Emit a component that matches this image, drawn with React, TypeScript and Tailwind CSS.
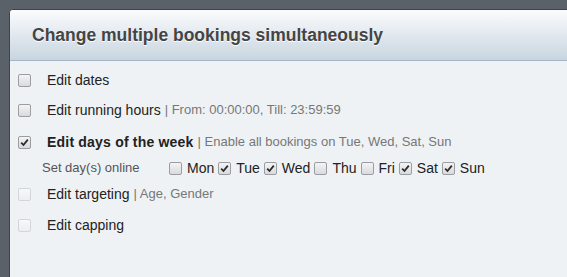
import React from "react";

type Day = { label: string; checked: boolean };

const DAYS: Day[] = [
  { label: "Mon", checked: false },
  { label: "Tue", checked: true },
  { label: "Wed", checked: true },
  { label: "Thu", checked: false },
  { label: "Fri", checked: false },
  { label: "Sat", checked: true },
  { label: "Sun", checked: true },
];

function Box({ checked = false, disabled = false }: { checked?: boolean; disabled?: boolean }) {
  return (
    <span
      className={
        disabled
          ? "inline-flex h-[13px] w-[13px] shrink-0 items-center justify-center rounded-[2px] border border-[#d3d6d9] bg-gradient-to-b from-[#f7f8f9] to-[#eceef0]"
          : "inline-flex h-[13px] w-[13px] shrink-0 items-center justify-center rounded-[2px] border border-[#9a9da1] bg-gradient-to-b from-[#f4f4f4] to-[#d9dadb]"
      }
    >
      {checked && (
        <svg width="9" height="9" viewBox="0 0 9 9">
          <path d="M1.2 4.6 L3.5 7 L7.8 1.6" fill="none" stroke="#2b2b2b" strokeWidth="1.8" />
        </svg>
      )}
    </span>
  );
}

function Row({
  label,
  note,
  checked,
  disabled,
  bold,
  className,
}: {
  label: string;
  note?: string;
  checked?: boolean;
  disabled?: boolean;
  bold?: boolean;
  className: string;
}) {
  return (
    <div className={`flex items-center pl-[8px] ${className}`}>
      <Box checked={checked} disabled={disabled} />
      <span className={`ml-[16px] text-[14px] text-[#222] ${bold ? "font-bold tracking-[0.2px]" : ""}`}>{label}</span>
      {note && <span className="ml-[4px] text-[13px] text-[#777]">| {note}</span>}
    </div>
  );
}

export default function App() {
  return (
    <div className="h-[277px] w-[567px] overflow-hidden bg-[#5b6169] pl-[9px] pt-[9px] font-['Liberation_Sans',Arial,sans-serif]">
      <div className="h-[300px] w-[600px] rounded-tl-[4px] border border-[#3f444b] bg-[#eef2f5]">
        <div className="flex h-[51px] items-center rounded-tl-[3px] border-b border-[#a3b7ca] bg-gradient-to-b from-[#fbfcfd] to-[#c8d5e0] pl-[22px]">
          <h1 className="text-[17.5px] font-bold text-[#444] [text-shadow:0_1px_0_#fff]">
            Change multiple bookings simultaneously
          </h1>
        </div>
        <div className="flex flex-col">
          <Row label="Edit dates" className="mt-[11px] h-[16px]" />
          <Row label="Edit running hours" note="From: 00:00:00, Till: 23:59:59" className="mt-[14px] h-[16px]" />
          <Row
            label="Edit days of the week"
            note="Enable all bookings on Tue, Wed, Sat, Sun"
            checked
            bold
            className="mt-[16px] h-[16px]"
          />
          <div className="mt-[10px] flex h-[16px] items-center pl-[32px]">
            <span className="w-[127px] text-[13px] text-[#555]">Set day(s) online</span>
            <div className="flex items-center">
              {DAYS.map((d) => (
                <span key={d.label} className="mr-[4px] inline-flex items-center">
                  <Box checked={d.checked} />
                  <span className="ml-[5px] text-[14px] text-[#222]">{d.label}</span>
                </span>
              ))}
            </div>
          </div>
          <Row label="Edit targeting" note="Age, Gender" disabled className="mt-[10px] h-[16px]" />
          <Row label="Edit capping" disabled className="mt-[15px] h-[16px]" />
        </div>
      </div>
    </div>
  );
}
